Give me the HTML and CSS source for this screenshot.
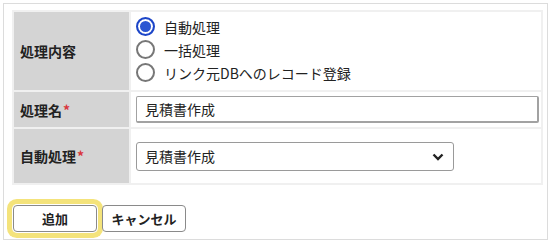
FILE: index.html
```html
<!DOCTYPE html>
<html lang="ja">

<head>
  <meta charset="UTF-8" />
  <title>処理追加</title>
  <link rel="stylesheet" href="styles.css">
</head>

<body>

  <div class="panel">
    <table class="form-table">
      <tr class="row-kind">
        <th>処理内容</th>
        <td>
          <div class="radios">
            <label class="radio"><input type="radio" name="kind" checked /><span>自動処理</span></label>
            <label class="radio"><input type="radio" name="kind" /><span>一括処理</span></label>
            <label class="radio"><input type="radio" name="kind" /><span>リンク元DBへのレコード登録</span></label>
          </div>
        </td>
      </tr>
      <tr class="row-name">
        <th>処理名<span class="req">*</span></th>
        <td><input type="text" class="text-input" value="見積書作成" /></td>
      </tr>
      <tr class="row-auto">
        <th>自動処理<span class="req">*</span></th>
        <td>
          <div class="select-wrap">
            <select class="select-input">
              <option>見積書作成</option>
            </select>
            <svg class="chevron" width="12" height="8" viewBox="0 0 12 8">
              <path d="M1.5 1.5 L6 6 L10.5 1.5" fill="none" stroke="#222" stroke-width="2.4" />
            </svg>
          </div>
        </td>
      </tr>
    </table>

    <div class="actions">
      <button class="btn btn-focus">追加</button>
      <button class="btn">キャンセル</button>
    </div>
  </div>

</body>
</html>
```

FILE: styles.css
```css
* {
  margin: 0;
  padding: 0;
  box-sizing: border-box;
  font-family: 'Noto Sans CJK JP', 'Noto Sans', sans-serif;
}

body {
  background: #ffffff;
  color: #222;
  font-size: 14px;
}

.panel {
  margin: 3px 0 0 3px;
  width: 545px;
  height: 237px;
  border: 1px solid #dcdcdc;
  padding: 6px 4px 0 8px;
}

.form-table {
  width: 531px;
  border-collapse: collapse;
  border: 1px solid #e4e4e4;
}

.form-table th,
.form-table td {
  border: 2px solid #f0f0f0;
  text-align: left;
  vertical-align: middle;
}

.form-table th {
  width: 117px;
  background: #d4d4d4;
  font-weight: bold;
  padding-left: 6px;
  font-size: 14px;
}

.form-table td {
  padding-left: 5px;
}

.row-kind th,
.row-kind td {
  height: 80px;
}

.row-kind td {
  padding-bottom: 3px;
}

.row-name th,
.row-name td {
  height: 37px;
}

.row-auto th,
.row-auto td {
  height: 56px;
}

.req {
  color: #d9363e;
  margin-left: 1px;
}

.radios {
  display: flex;
  flex-direction: column;
  gap: 3px;
}

.radio {
  display: flex;
  align-items: center;
  gap: 9px;
  height: 20px;
  font-size: 14px;
}

.radio input {
  appearance: none;
  width: 19px;
  height: 19px;
  border: 2px solid #777;
  border-radius: 50%;
  background: #fff;
  margin-left: 0;
}

.radio input:checked {
  border-color: #1c45c8;
  box-shadow: inset 0 0 0 2px #fff, inset 0 0 0 8px #2a55d2;
}

.text-input {
  width: 403px;
  height: 27px;
  border: 1px solid #a2a2a2;
  border-width: 1px 2px 2px 1px;
  border-radius: 2px;
  padding-left: 8px;
  font-size: 14px;
  color: #222;
  background: #fff;
}

.select-wrap {
  position: relative;
  width: 318px;
}

.select-input {
  appearance: none;
  width: 318px;
  height: 29px;
  border: 1px solid #9a9a9a;
  border-radius: 3px;
  padding-left: 8px;
  font-size: 14px;
  color: #222;
  background: #fff;
}

.chevron {
  position: absolute;
  right: 10px;
  top: 11px;
}

.actions {
  display: flex;
  gap: 5px;
  margin-top: 20px;
  padding-left: 1px;
}

.btn {
  width: 84px;
  height: 27px;
  border: 1px solid #8a8a8a;
  border-radius: 4px;
  background: #fff;
  font-size: 13px;
  font-weight: bold;
  color: #222;
}

.btn-focus {
  box-shadow: 0 0 0 1px #fff, 0 0 0 6px #f4e37b;
  border-radius: 4px;
}
```
